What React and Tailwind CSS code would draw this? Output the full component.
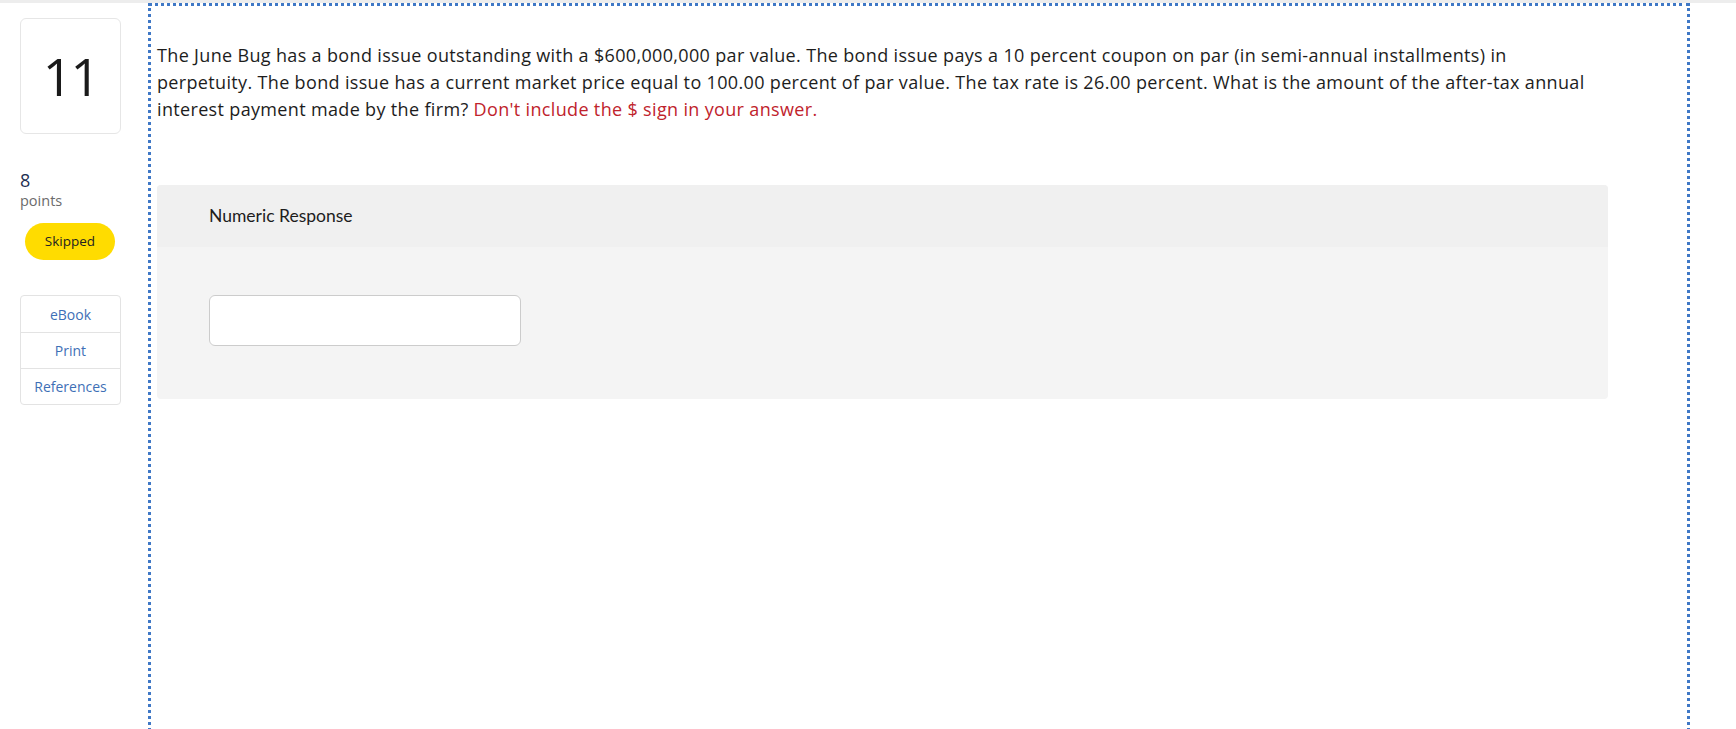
import React from "react";

const SideLinks = () => {
    const links = ["eBook", "Print", "References"];
    return (
        <div className="ml-5 mt-[35px] w-[101px] rounded-[4px] border border-[#e3e3e3] bg-white">
            {links.map((l, i) => (
                <div
                    key={l}
                    className={`flex h-[36px] items-center justify-center text-[14px] text-[#3e6fb6] ${i > 0 ? "border-t border-[#e3e3e3]" : ""}`}
                >
                    {l}
                </div>
            ))}
        </div>
    );
};

export default function App() {
    return (
        <div className="h-[729px] w-full overflow-hidden bg-white font-['Open_Sans','Liberation_Sans',sans-serif] text-[#1d1d1d]">
            <div className="h-[3px] w-full bg-[#ededed]" />
            <div className="flex">
                {/* left rail */}
                <div className="w-[148px] shrink-0">
                    <div className="ml-5 mt-[15px] flex h-[116px] w-[101px] items-center justify-center rounded-[6px] border border-[#e6e6e6]">
                        <span className="text-[52px] leading-none tracking-[-2px] text-[#1a1a1a]">11</span>
                    </div>
                    <div className="ml-5 mt-[35px] text-[18px] leading-[22px] text-[#1f2f52]">8</div>
                    <div className="ml-5 text-[14.5px] leading-[20px] text-[#6b6b6b]">points</div>
                    <div className="ml-[25px] mt-[12px] flex h-[37px] w-[90px] items-center justify-center rounded-full bg-[#ffdc00] text-[13.5px] text-[#222]">
                        Skipped
                    </div>
                    <SideLinks />
                </div>

                {/* question area */}
                <div className="h-[800px] w-[1542px] shrink-0 border-[3px] border-b-0 border-dotted border-[#3f78c6] pl-[6px] pr-[79px]">
                    <p className="mt-[36px] pr-[23px] text-[18px] leading-[27px] tracking-[0.34px] text-[#1d1d1d]">
                        The June Bug has a bond issue outstanding with a $600,000,000 par value. The bond issue pays a 10 percent coupon on par (in semi-annual installments) in perpetuity. The bond issue has a current market price equal to 100.00 percent of par value. The tax rate is 26.00 percent. What is the amount of the after-tax annual interest payment made by the firm?{" "}
                        <span className="text-[#c0232c]">Don't include the $ sign in your answer.</span>
                    </p>

                    <div className="mt-[62px] overflow-hidden rounded-[4px] bg-[#f4f4f4]">
                        <div className="flex h-[62px] items-center bg-[#f0f0f0] pl-[52px] font-['Lato',sans-serif] text-[17.5px] text-[#1d1d1d]">
                            Numeric Response
                        </div>
                        <div className="pb-[53px] pl-[52px] pt-[48px]">
                            <input
                                type="text"
                                className="h-[51px] w-[312px] rounded-[6px] border border-[#cccccc] bg-white px-3 outline-none"
                            />
                        </div>
                    </div>
                </div>
            </div>
        </div>
    );
}
